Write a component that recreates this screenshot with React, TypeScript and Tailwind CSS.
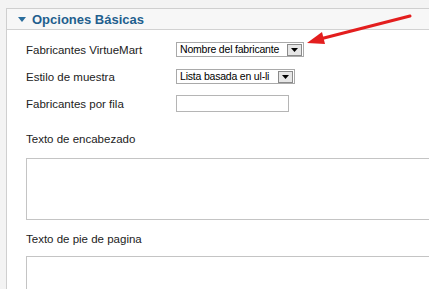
const font = { fontFamily: '"Liberation Sans", Arial, sans-serif' };

function Select({ value, width }: { value: string; width: number }) {
  return (
    <div
      className="flex h-[15px] items-center gap-[3px] border border-[#a9a9a9] bg-white pl-[3px] pr-[1px] text-[10.5px] leading-none tracking-[-0.2px] text-black"
      style={{ width }}
    >
      <span className="flex-1 truncate">{value}</span>
      <span className="flex h-[12px] w-[15px] shrink-0 items-center justify-center border border-[#8a8a8a] bg-[#e6e6e6]">
        <svg width="7" height="4" viewBox="0 0 7 4">
          <path d="M0 0h7L3.5 4z" fill="#000" />
        </svg>
      </span>
    </div>
  );
}

function Row({ label, children }: { label: string; children: React.ReactNode }) {
  return (
    <div className="flex items-center">
      <div className="w-[150px] text-[11.5px] leading-[14px] text-[#222]">{label}</div>
      {children}
    </div>
  );
}

export default function App() {
  return (
    <div className="relative h-[289px] w-[429px] overflow-hidden bg-[#f3f3f3] pl-[6px] pt-[8px]" style={font}>
      <div className="h-[300px] w-[440px] border border-[#cfcfcf] bg-white">
        {/* header */}
        <div className="flex h-[21px] items-center gap-[6px] border-b border-[#d2d2d2] bg-[#f7f7f7] pl-[11px]">
          <svg width="8" height="5" viewBox="0 0 8 5">
            <path d="M0 0h8L4 5z" fill="#2a6d9c" />
          </svg>
          <span className="text-[13px] font-bold leading-none text-[#1f5f8e]">Opciones Básicas</span>
        </div>

        {/* form */}
        <div className="flex flex-col pl-[19px]">
          <div className="mt-[12px]">
            <Row label="Fabricantes VirtueMart">
              <Select value="Nombre del fabricante" width={128} />
            </Row>
          </div>
          <div className="mt-[12px]">
            <Row label="Estilo de muestra">
              <Select value="Lista basada en ul-li" width={119} />
            </Row>
          </div>
          <div className="mt-[11px]">
            <Row label="Fabricantes por fila">
              <div className="h-[17px] w-[113px] border border-[#b5b5b5] bg-white" />
            </Row>
          </div>

          <div className="mt-[20px] text-[11.5px] leading-[14px] text-[#222]">Texto de encabezado</div>
          <div className="mt-[12px] h-[62px] w-[420px] border border-[#c4c4c4] bg-white" />

          <div className="mt-[12px] text-[11.5px] leading-[14px] text-[#222]">Texto de pie de pagina</div>
          <div className="mt-[10px] h-[63px] w-[420px] border border-[#c4c4c4] bg-white" />
        </div>
      </div>

      {/* red pointer arrow */}
      <svg className="absolute left-0 top-0" width="429" height="289" viewBox="0 0 429 289">
        <line x1="410" y1="16" x2="320" y2="39" stroke="#e31e1e" strokeWidth="3" strokeLinecap="round" />
        <path d="M307 43 L322 32 L325 44 Z" fill="#e31e1e" />
      </svg>
    </div>
  );
}
